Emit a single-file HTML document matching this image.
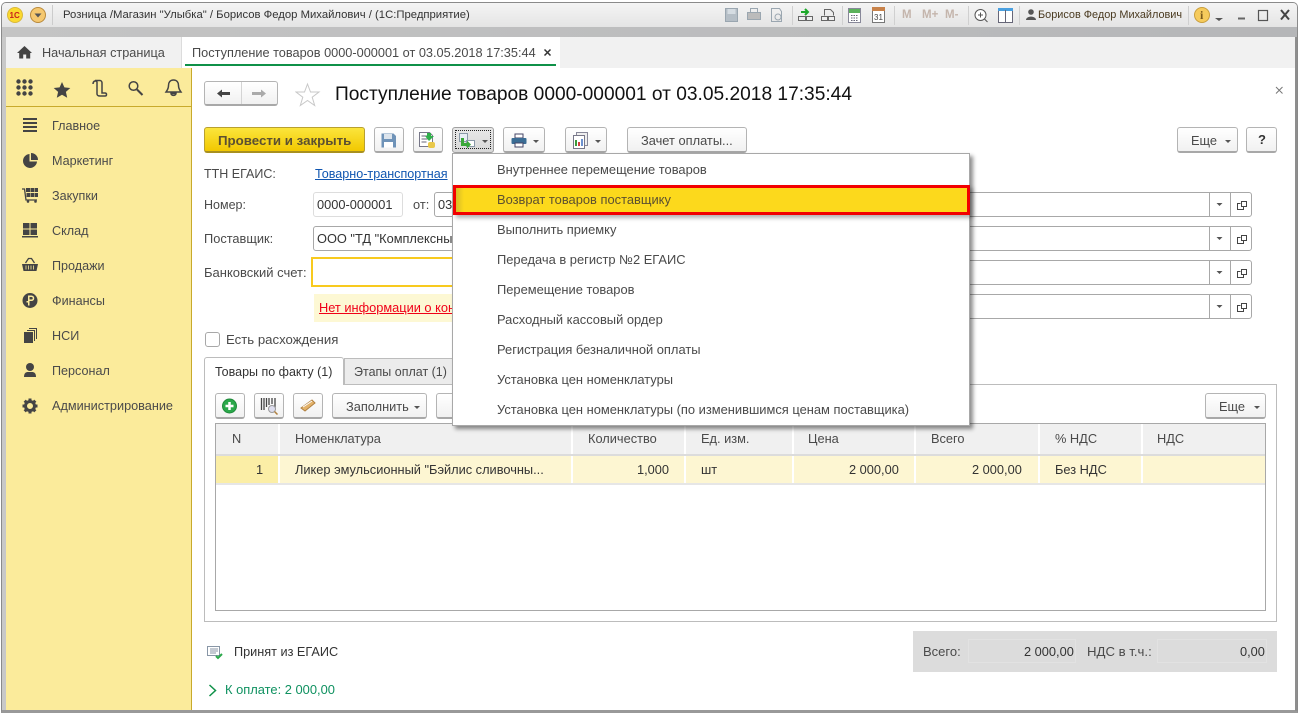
<!DOCTYPE html>
<html><head><meta charset="utf-8"><style>
html,body{margin:0;padding:0;background:#fff}
body{width:1302px;height:716px;position:relative;overflow:hidden;font:12.8px "Liberation Sans",sans-serif;color:#4a4a4a}
div,span,svg{position:absolute;box-sizing:border-box}
.t{white-space:nowrap;line-height:14px}
.m{font-size:12.9px}
.s{font-size:12.6px}
.b{background:linear-gradient(#fff,#f1f1f1);border:1px solid #b4b4b4;border-bottom:2px solid #a8a8a8;border-radius:3px}
.i{border:1px solid #a8a8a8;border-radius:3px;background:#fff;height:25px}
.c{width:0;height:0;border-left:3px solid transparent;border-right:3px solid transparent;border-top:3px solid #555}
.h{background:#f0f0f0;top:424px;height:30px;border-right:2px solid #fff}
.r{background:#fdf6d2;top:456px;height:27px;border-right:2px solid #fff}
</style></head><body>
<!-- window -->
<div style="left:1px;top:2px;width:1297px;height:711px;background:#c8c8c8;border:1px solid #8a8a8a;border-radius:5px 5px 0 0;border-bottom:3px solid #999"></div>
<div style="left:2px;top:3px;width:1295px;height:24px;background:linear-gradient(#f4f4f4,#e4e4e4);border-radius:4px 4px 0 0"></div>
<div style="left:2px;top:27px;width:1295px;height:10px;background:linear-gradient(90deg,#c4c4c4,#b5b6b8)"></div>
<div style="left:6px;top:37px;width:1291px;height:31px;background:#f1f1f1"></div>
<div style="left:6px;top:68px;width:1290px;height:642px;background:#fff"></div>
<div style="left:1295px;top:37px;width:2px;height:674px;background:#8e8e8e"></div>
<!-- titlebar -->
<svg style="left:7px;top:7px" width="42" height="18"><circle cx="8" cy="8" r="7.5" fill="#fbd92f" stroke="#d9b93c"/><text x="2.5" y="11" font-size="8" font-weight="bold" fill="#c8201c" font-family="Liberation Sans">1С</text><circle cx="31" cy="8" r="7.5" fill="#f5c870" stroke="#b98a3c"/><path d="M27.500 6.500h7l-3.500 4z" fill="#555"/></svg>
<div style="left:52px;top:5px;width:1px;height:20px;background:#ccc"></div>
<div class="t" style="left:63px;top:8px;font-size:11.300px;color:#333">Розница /Магазин "Улыбка" / Борисов Федор Михайлович /  (1С:Предприятие)</div>
<svg style="left:720px;top:5px" width="500" height="20">
<g fill="none" stroke="#9aa6b0"><rect x="5.500" y="3.500" width="12" height="13" fill="#b5bec6"/><rect x="7.500" y="4" width="8" height="5" fill="#d5dce2" stroke="none"/><rect x="27.500" y="7.500" width="13" height="7" fill="#bbb"/><rect x="30.500" y="3.500" width="7" height="4"/><path d="M51.500 3.500h8l2 3v10h-10z"/><circle cx="58" cy="12" r="3"/></g>
<path d="M72.500 1v19M122.500 1v19M174.500 1v19M248.500 1v19M299.500 1v19M468.500 1v19M509.500 1v19" stroke="#d0d0d0"/>
<g fill="none" stroke="#666"><rect x="78.500" y="11.500" width="7" height="4" fill="#eee"/><rect x="86.500" y="11.500" width="6" height="4" fill="#eee"/><rect x="101.500" y="11.500" width="6" height="4" fill="#eee"/><rect x="108.500" y="11.500" width="6" height="4" fill="#eee"/><path d="M104.500 10.500v-6h6l3 3v3"/></g>
<path d="M81 7h6M85 4l3 3-3 3" stroke="#1da82a" stroke-width="2" fill="none"/>
<rect x="128.500" y="3.500" width="12" height="14" fill="#fff" stroke="#889"/><rect x="129" y="4" width="11" height="4" fill="#5cb25c"/><path d="M131 10.500h7M131 13h7M131 15.500h7" stroke="#667" stroke-dasharray="1.500 1"/>
<rect x="152.500" y="4.500" width="12" height="13" fill="#fff" stroke="#777"/><rect x="152" y="2" width="13" height="4" fill="#c8824a"/><text x="154" y="15" font-size="8" fill="#444" font-family="Liberation Sans">31</text>
<g fill="none" stroke="#555"><circle cx="260.500" cy="10" r="5.500" fill="#fff"/><path d="M264.500 14l3 3M258 10h5M260.500 7.500v5"/></g>
<rect x="278.500" y="3.500" width="14" height="14" fill="#fff" stroke="#667"/><rect x="278" y="3" width="15" height="3" fill="#4aa0e0"/><path d="M285.500 5v12" stroke="#667"/>
</svg>
<div class="t" style="left:902px;top:8px;font-size:11.500px;font-weight:bold;color:#c4b5ac">M</div>
<div class="t" style="left:922px;top:8px;font-size:11.500px;font-weight:bold;color:#c4b5ac">M+</div>
<div class="t" style="left:945px;top:8px;font-size:11.500px;font-weight:bold;color:#c4b5ac">M-</div>
<svg style="left:1025px;top:9px" width="12" height="12"><circle cx="6" cy="3" r="2.800" fill="#555"/><path d="M1 11c0-4.500 10-4.500 10 0z" fill="#555"/></svg>
<div class="t" style="left:1038px;top:8px;font-size:10.900px;color:#4a3a20">Борисов Федор Михайлович</div>
<svg style="left:1190px;top:6px" width="108" height="20"><circle cx="12" cy="9" r="7.500" fill="#f6cb5c" stroke="#c99e3c"/><text x="10" y="13" font-size="12" font-weight="bold" font-family="Liberation Serif" fill="#7a5a1c">i</text><path d="M25 12h8l-4 3z" fill="#555"/><path d="M48 12.500h7" stroke="#666" stroke-width="2"/><rect x="68.500" y="4.500" width="9" height="10" fill="none" stroke="#555" stroke-width="1.200"/><path d="M91 4l8 9.500M99 4l-8 9.500" stroke="#444" stroke-width="2"/></svg>
<!-- tabs -->
<svg style="left:17px;top:45px" width="16" height="14"><path d="M7.500 1L0 8h2.200v5.500h4v-4h3v4h4V8H15z" fill="#444"/></svg>
<div class="t" style="left:42px;top:46px;font-size:12.700px">Начальная страница</div>
<div style="left:181px;top:37px;width:1px;height:31px;background:#dcdcdc"></div>
<div style="left:182px;top:37px;width:378px;height:31px;background:#fff"></div>
<div class="t" style="left:192px;top:46px;font-size:12.740px">Поступление товаров 0000-000001 от 03.05.2018 17:35:44</div>
<svg style="left:543px;top:48px" width="10" height="10"><path d="M1.500 1.500l6 6M7.500 1.500l-6 6" stroke="#333" stroke-width="1.500"/></svg>
<div style="left:185px;top:64px;width:371px;height:2px;background:#0f9148"></div>
<!-- sidebar -->
<div style="left:6px;top:68px;width:186px;height:642px;background:#fbeb9b;border-right:1px solid #c8aa2c"></div>
<div style="left:6px;top:106px;width:186px;height:1px;background:#c8aa2c"></div>
<svg style="left:14px;top:76px" width="170" height="24" fill="#444">
<g><circle cx="4.500" cy="5.500" r="2.200"/><circle cx="10.500" cy="5.500" r="2.200"/><circle cx="16.500" cy="5.500" r="2.200"/><circle cx="4.500" cy="11.500" r="2.200"/><circle cx="10.500" cy="11.500" r="2.200"/><circle cx="16.500" cy="11.500" r="2.200"/><circle cx="4.500" cy="17.500" r="2.200"/><circle cx="10.500" cy="17.500" r="2.200"/><circle cx="16.500" cy="17.500" r="2.200"/></g>
<path transform="translate(0 3)" d="M48 3l2.400 5.400 5.900.6-4.400 3.900 1.300 5.800L48 15.800l-5.200 2.900 1.300-5.800L39.700 9l5.900-.6z"/>
<path d="M79 8c0-3 3-4 4-2v12c0 1 1 2 3 2h5c2 0 2-3 0-3h-3V7c0-1.500-1-2.500-2-2.500h-5" fill="none" stroke="#444" stroke-width="1.500"/>
<circle cx="119.500" cy="10" r="4.300" fill="none" stroke="#444" stroke-width="1.500"/><path d="M123 13.500l5.500 5.500" stroke="#444" stroke-width="2"/>
<g transform="translate(1 1)"><path d="M158.500 3c-3.500 0-5 2.500-5 5.500 0 3.500-1.500 5-2.500 6.500h15c-1-1.500-2.500-3-2.500-6.500 0-3-1.500-5.500-5-5.500z M156 16.500h5c0 2.500-5 2.500-5 0z" fill="none" stroke="#444" stroke-width="1.500"/></g>
</svg>
<svg style="left:20px;top:115px" width="22" height="300" fill="#444">
<path d="M3 3h14v2H3zM3 7h14v2H3zM3 11h14v2H3zM3 15h14v2H3z"/>
<path d="M9.500 39a7 7 0 1 0 7.500 7.500H9.500zM11 38v7h7a7 7 0 0 0-7-7z"/>
<path d="M2 74h2.500l1.500 11h11" fill="none" stroke="#444" stroke-width="1.300"/><path d="M6 73h4v4H6zM10.500 73h3.500v4h-3.500zM14.500 73H18v4h-3.500zM6.500 78h3.500v4H6.500zM10.500 78h3.500v4h-3.500zM14.500 78H18v4h-3.500z"/><circle cx="8" cy="86.500" r="1.300"/><circle cx="15.500" cy="86.500" r="1.300"/>
<path d="M3 108h6.500v5.500H3zM10.500 108H17v5.500h-6.500zM3 114.500h6.500v5.500H3zM10.500 114.500H17v5.500h-6.500zM2 121h16v1.500H2z"/>
<path d="M2 149h16l-1.500 7h-13z"/><path d="M5.500 148l3-4.500h3l3 4.500" fill="none" stroke="#444" stroke-width="1.300"/><path d="M6 150.500v4M8.500 150.500v4M11 150.500v4M13.500 150.500v4" stroke="#fbeb9b" stroke-width=".8"/>
<circle cx="10" cy="185.500" r="7.500"/><path d="M8 180.500h3.500a2.500 2.500 0 0 1 0 5.500H9.500v4.500H8v-3H6.500V186H8zM9.500 182v2.500h2a1.200 1.200 0 0 0 0-2.500z" fill="#fbeb9b"/>
<path d="M4 217h9v11H4zM14 216v10h1v-11H7v1zM16 214v10h1v-11H9v1z"/>
<circle cx="10" cy="252" r="4"/><path d="M4 262c0-4 2-5 4-5h4c2 0 4 1 4 5z"/>
<g transform="translate(10 291)"><circle r="4.500" fill="none" stroke="#444" stroke-width="3"/><g id="g"><rect x="-1.500" y="-7.500" width="3" height="3"/></g><rect x="-1.500" y="-7.500" width="3" height="3" transform="rotate(45)"/><rect x="-1.500" y="-7.500" width="3" height="3" transform="rotate(90)"/><rect x="-1.500" y="-7.500" width="3" height="3" transform="rotate(135)"/><rect x="-1.500" y="-7.500" width="3" height="3" transform="rotate(180)"/><rect x="-1.500" y="-7.500" width="3" height="3" transform="rotate(225)"/><rect x="-1.500" y="-7.500" width="3" height="3" transform="rotate(270)"/><rect x="-1.500" y="-7.500" width="3" height="3" transform="rotate(315)"/></g>
</svg>
<div class="t" style="left:52px;top:119px;font-size:12.600px">Главное</div>
<div class="t" style="left:52px;top:154px;font-size:12.600px">Маркетинг</div>
<div class="t" style="left:52px;top:189px;font-size:12.600px">Закупки</div>
<div class="t" style="left:52px;top:224px;font-size:12.600px">Склад</div>
<div class="t" style="left:52px;top:259px;font-size:12.600px">Продажи</div>
<div class="t" style="left:52px;top:294px;font-size:12.600px">Финансы</div>
<div class="t" style="left:52px;top:329px;font-size:12.600px">НСИ</div>
<div class="t" style="left:52px;top:364px;font-size:12.600px">Персонал</div>
<div class="t" style="left:52px;top:399px;font-size:12.700px">Администрирование</div>
<!-- header -->
<div class="b" style="left:204px;top:81px;width:74px;height:25px"></div>
<div style="left:241px;top:82px;width:1px;height:22px;background:#d4d4d4"></div>
<svg style="left:215px;top:88px" width="54" height="12"><path d="M2 5.500l5-4v2.500h8v3H7V9.500z" fill="#444"/><path d="M51 5.500l-5-4v2.500h-9v3h9V9.500z" fill="#aaa"/></svg>
<svg style="left:295px;top:82px" width="26" height="26"><path d="M12.500 2l3 8h8.500l-6.800 5.200 2.500 8.300-7.200-5-7.200 5 2.500-8.300L1 10h8.500z" fill="#fff" stroke="#c8c8c8"/></svg>
<div class="t" style="left:335px;top:84px;font-size:19.170px;line-height:21px;color:#111">Поступление товаров 0000-000001 от 03.05.2018 17:35:44</div>
<svg style="left:1275px;top:86px" width="9" height="9"><path d="M1 1l6.500 6.500M7.500 1L1 7.500" stroke="#777"/></svg>
<!-- toolbar -->
<div style="left:204px;top:127px;width:161px;height:26px;background:linear-gradient(#fbe53c,#f2c800);border:1px solid #b8a030;border-bottom:2px solid #a89020;border-radius:3px"></div>
<div class="t" style="left:218px;top:134px;font-size:13.300px;font-weight:bold;color:#5c5030">Провести и закрыть</div>
<div class="b" style="left:374px;top:127px;width:30px;height:26px"></div>
<svg style="left:381px;top:133px" width="16" height="15"><path d="M.500.500h12l2.500 2.500v11.500H.500z" fill="#6f93b8"/><rect x="3" y="1" width="8" height="5" fill="#dce4ec"/><rect x="3" y="9" width="9" height="5.500" fill="#fff"/></svg>
<div class="b" style="left:413px;top:127px;width:30px;height:26px"></div>
<svg style="left:418px;top:130px" width="20" height="20"><path d="M1.500 2.500h10l3 3v11h-13z" fill="#fff" stroke="#778"/><path d="M3.500 6h6M3.500 9h6M3.500 12h5" stroke="#667"/><path d="M9 3h4v3h3l-5 5-4-5h2z" fill="#2fb04a"/><rect x="10" y="12" width="7" height="6" rx="2" fill="#e9c84a"/></svg>
<div style="left:452px;top:127px;width:42px;height:26px;background:linear-gradient(#e8e8e8,#d8d8d8);border:1px solid #a0a0a0;border-radius:3px"></div>
<div style="left:455px;top:130px;width:36px;height:19px;border:1px dotted #222"></div>
<svg style="left:459px;top:133px" width="18" height="16"><rect x=".500" y=".500" width="8" height="8" fill="#e8eef4" stroke="#8a99a8"/><rect x="7.500" y="7.500" width="8" height="6" fill="#fff" stroke="#8a99a8"/><path d="M2 5h3v5h3V7.500l4 4-4 4V13H2z" fill="#3aa83a"/></svg>
<div class="c" style="left:482px;top:140px"></div>
<div class="b" style="left:503px;top:127px;width:42px;height:26px"></div>
<svg style="left:511px;top:133px" width="16" height="15"><rect x="4" y="1" width="8" height="4" fill="#fff" stroke="#446"/><rect x=".500" y="5" width="15" height="6" rx="1" fill="#3a6c94"/><rect x="4" y="10" width="8" height="4" fill="#fff" stroke="#446"/></svg>
<div class="c" style="left:533px;top:140px"></div>
<div class="b" style="left:565px;top:127px;width:42px;height:26px"></div>
<svg style="left:572px;top:132px" width="18" height="17"><rect x="4.500" y=".500" width="11" height="13" fill="#eee" stroke="#889"/><rect x="1.500" y="3.500" width="11" height="13" fill="#fff" stroke="#778"/><path d="M4 8v6" stroke="#3a9a3a" stroke-width="2"/><path d="M7 10v4" stroke="#d04040" stroke-width="2"/><path d="M10 7v7" stroke="#3a6cc0" stroke-width="1.500"/></svg>
<div class="c" style="left:595px;top:140px"></div>
<div class="b" style="left:627px;top:127px;width:120px;height:26px"></div>
<div class="t" style="left:641px;top:134px;font-size:12.850px">Зачет оплаты...</div>
<div class="b" style="left:1177px;top:127px;width:61px;height:26px"></div>
<div class="t" style="left:1191px;top:134px">Еще</div>
<div class="c" style="left:1225px;top:140px"></div>
<div class="b" style="left:1246px;top:127px;width:31px;height:26px"></div>
<div class="t" style="left:1258px;top:133px;font-size:13px;font-weight:bold;color:#333">?</div>
<!-- form -->
<div class="t" style="left:204px;top:167px;font-size:12.500px">ТТН ЕГАИС:</div>
<div class="t" style="left:315px;top:167px;font-size:12.600px;color:#0f55b0;text-decoration:underline">Товарно-транспортная</div>
<div class="t" style="left:204px;top:198px;font-size:12.500px">Номер:</div>
<div class="i" style="left:313px;top:192px;width:90px;border-color:#ddd"></div>
<div class="t" style="left:317px;top:198px;color:#333">0000-000001</div>
<div class="t" style="left:413px;top:198px">от:</div>
<div class="i" style="left:434px;top:192px;width:40px"></div>
<div class="t" style="left:438px;top:198px;color:#333">03</div>
<div class="t" style="left:204px;top:232px;font-size:12.800px">Поставщик:</div>
<div class="i" style="left:313px;top:226px;width:200px"></div>
<div class="t" style="left:317px;top:232px;color:#333">ООО "ТД "Комплексны</div>
<div class="t" style="left:204px;top:266px;font-size:13px">Банковский счет:</div>
<div style="left:311px;top:257px;width:200px;height:30px;border:2px solid #f8ca1e"></div>
<div style="left:314px;top:294px;width:180px;height:28px;background:#fdf8d4"></div>
<div class="t" style="left:319px;top:301px;color:#f00018;text-decoration:underline">Нет информации о контрагенте</div>
<!-- right fields -->
<div class="i" style="left:960px;top:192px;width:292px"></div>
<div class="i" style="left:960px;top:226px;width:292px"></div>
<div class="i" style="left:960px;top:260px;width:292px"></div>
<div class="i" style="left:960px;top:294px;width:292px"></div>
<svg style="left:1209px;top:192px" width="44" height="128" fill="none">
<g><path d="M.500 0v25M21.500 0v25" stroke="#a8a8a8"/><path d="M7.500 11h6l-3 3z" fill="#555"/><rect x="32.500" y="9.500" width="5" height="5" stroke="#444"/><path d="M31.500 11.500h-3v6h6v-3" stroke="#444"/></g>
<g transform="translate(0 34)"><path d="M.500 0v25M21.500 0v25" stroke="#a8a8a8"/><path d="M7.500 11h6l-3 3z" fill="#555"/><rect x="32.500" y="9.500" width="5" height="5" stroke="#444"/><path d="M31.500 11.500h-3v6h6v-3" stroke="#444"/></g>
<g transform="translate(0 68)"><path d="M.500 0v25M21.500 0v25" stroke="#a8a8a8"/><path d="M7.500 11h6l-3 3z" fill="#555"/><rect x="32.500" y="9.500" width="5" height="5" stroke="#444"/><path d="M31.500 11.500h-3v6h6v-3" stroke="#444"/></g>
<g transform="translate(0 102)"><path d="M.500 0v25M21.500 0v25" stroke="#a8a8a8"/><path d="M7.500 11h6l-3 3z" fill="#555"/><rect x="32.500" y="9.500" width="5" height="5" stroke="#444"/><path d="M31.500 11.500h-3v6h6v-3" stroke="#444"/></g>
</svg>
<!-- checkbox -->
<div style="left:205px;top:332px;width:15px;height:15px;border:1px solid #a8a8a8;border-radius:3px"></div>
<div class="t" style="left:226px;top:333px;font-size:13.200px">Есть расхождения</div>
<!-- tabs panel -->
<div style="left:204px;top:384px;width:1073px;height:238px;border:1px solid #bcbcbc"></div>
<div style="left:344px;top:358px;width:110px;height:27px;background:#ececec;border:1px solid #bcbcbc"></div>
<div class="t" style="left:354px;top:365px;font-size:12.500px">Этапы оплат (1)</div>
<div style="left:204px;top:357px;width:140px;height:28px;background:#fff;border:1px solid #bcbcbc;border-bottom:0;border-radius:3px 3px 0 0"></div>
<div class="t" style="left:215px;top:365px;font-size:12.500px;color:#333">Товары по факту (1)</div>
<!-- table toolbar -->
<div class="b" style="left:215px;top:393px;width:30px;height:26px"></div>
<svg style="left:221px;top:398px" width="17" height="17"><circle cx="8.500" cy="8" r="7" fill="#2aa84a" stroke="#1f8a3a"/><path d="M4.500 8h8M8.500 4v8" stroke="#fff" stroke-width="2.500"/></svg>
<div class="b" style="left:254px;top:393px;width:30px;height:26px"></div>
<svg style="left:260px;top:397px" width="20" height="18"><path d="M1.500 1v12M4 1v12M6.500 1v9M9 1v7M12 1v6M15 1v12" stroke="#444" stroke-width="1.300"/><circle cx="12" cy="12" r="3.500" fill="#dde" stroke="#999"/><path d="M14.500 14.500l3 3" stroke="#b08040" stroke-width="1.500"/></svg>
<div class="b" style="left:293px;top:393px;width:30px;height:26px"></div>
<svg style="left:300px;top:398px" width="17" height="15"><path d="M1 10L12 2l3 3L5 13z" fill="#e3b26a" stroke="#b08040"/><path d="M3 9l9-6" stroke="#fff"/></svg>
<div class="b" style="left:332px;top:393px;width:95px;height:26px"></div>
<div class="t" style="left:346px;top:400px">Заполнить</div>
<div class="c" style="left:414px;top:406px"></div>
<div class="b" style="left:436px;top:393px;width:30px;height:26px"></div>
<div class="b" style="left:1205px;top:393px;width:61px;height:26px"></div>
<div class="t" style="left:1219px;top:400px">Еще</div>
<div class="c" style="left:1254px;top:406px"></div>
<!-- table -->
<div style="left:215px;top:423px;width:1051px;height:188px;border:1px solid #a8a8a8"></div>
<div class="h" style="left:216px;width:64px"></div>
<div class="h" style="left:280px;width:293px"></div>
<div class="h" style="left:573px;width:113px"></div>
<div class="h" style="left:686px;width:108px"></div>
<div class="h" style="left:794px;width:122px"></div>
<div class="h" style="left:916px;width:124px"></div>
<div class="h" style="left:1040px;width:103px"></div>
<div class="h" style="left:1143px;width:122px;border-right:0"></div>
<div style="left:216px;top:454px;width:1049px;height:2px;background:#dcdcdc"></div>
<div class="r" style="left:216px;width:64px;background:#fbeea6"></div>
<div class="r" style="left:280px;width:293px"></div>
<div class="r" style="left:573px;width:113px"></div>
<div class="r" style="left:686px;width:108px"></div>
<div class="r" style="left:794px;width:122px"></div>
<div class="r" style="left:916px;width:124px"></div>
<div class="r" style="left:1040px;width:103px"></div>
<div class="r" style="left:1143px;width:122px;border-right:0"></div>
<div style="left:216px;top:483px;width:1049px;height:2px;background:#e6e6e6"></div>
<div class="t" style="left:232px;top:432px">N</div>
<div class="t" style="left:295px;top:432px">Номенклатура</div>
<div class="t" style="left:588px;top:432px">Количество</div>
<div class="t" style="left:701px;top:432px">Ед. изм.</div>
<div class="t" style="left:808px;top:432px">Цена</div>
<div class="t" style="left:931px;top:432px">Всего</div>
<div class="t" style="left:1055px;top:432px">% НДС</div>
<div class="t" style="left:1157px;top:432px">НДС</div>
<div class="t" style="left:256px;top:463px;color:#333">1</div>
<div class="t" style="left:295px;top:463px;color:#333">Ликер эмульсионный "Бэйлис сливочны...</div>
<div class="t" style="left:637px;top:463px;color:#333">1,000</div>
<div class="t" style="left:701px;top:463px;color:#333">шт</div>
<div class="t" style="left:849px;top:463px;color:#333">2 000,00</div>
<div class="t" style="left:972px;top:463px;color:#333">2 000,00</div>
<div class="t" style="left:1055px;top:463px;color:#333">Без НДС</div>
<!-- footer -->
<svg style="left:207px;top:646px" width="17" height="14"><rect x=".500" y=".500" width="12" height="9" fill="#fff" stroke="#8896a6"/><path d="M3 3h8M3 5h8M3 7h6" stroke="#8896a6"/><path d="M9 10l2 2 4-4" stroke="#2aa84a" stroke-width="2" fill="none"/></svg>
<div class="t" style="left:234px;top:645px;font-size:12.700px;color:#333">Принят из ЕГАИС</div>
<svg style="left:208px;top:684px" width="10" height="13"><path d="M1.500 1l6 5.500-6 5.500" fill="none" stroke="#0f9148" stroke-width="1.500"/></svg>
<div class="t" style="left:225px;top:683px;font-size:12.900px;color:#0f9160">К оплате: 2 000,00</div>
<div style="left:913px;top:631px;width:364px;height:41px;background:#dcdcdc"></div>
<div style="left:968px;top:639px;width:108px;height:24px;border:1px solid #e2e2e2"></div>
<div style="left:1157px;top:639px;width:110px;height:24px;border:1px solid #e2e2e2"></div>
<div class="t" style="left:923px;top:645px;font-size:13px">Всего:</div>
<div class="t" style="left:1024px;top:645px;color:#333">2 000,00</div>
<div class="t" style="left:1087px;top:645px;font-size:13.200px">НДС в т.ч.:</div>
<div class="t" style="left:1240px;top:645px;color:#333">0,00</div>
<!-- dropdown -->
<div style="left:452px;top:153px;width:518px;height:273px;background:#fff;border:1px solid #a8a8a8;box-shadow:3px 3px 4px rgba(0,0,0,.45)"></div>
<div style="left:453px;top:185px;width:517px;height:30px;background:linear-gradient(90deg,#d8bc28,#fcd91c 8px);border:3px solid #f20000;box-shadow:3px 3px 4px rgba(0,0,0,.3)"></div>
<div class="t m" style="left:497px;top:163px">Внутреннее перемещение товаров</div>
<div class="t m" style="left:497px;top:193px;color:#5c5030">Возврат товаров поставщику</div>
<div class="t m" style="left:497px;top:223px">Выполнить приемку</div>
<div class="t m" style="left:497px;top:253px">Передача в регистр №2 ЕГАИС</div>
<div class="t m" style="left:497px;top:283px">Перемещение товаров</div>
<div class="t m" style="left:497px;top:313px">Расходный кассовый ордер</div>
<div class="t m" style="left:497px;top:343px">Регистрация безналичной оплаты</div>
<div class="t m" style="left:497px;top:373px">Установка цен номенклатуры</div>
<div class="t m" style="left:497px;top:403px">Установка цен номенклатуры (по изменившимся ценам поставщика)</div>
</body></html>
